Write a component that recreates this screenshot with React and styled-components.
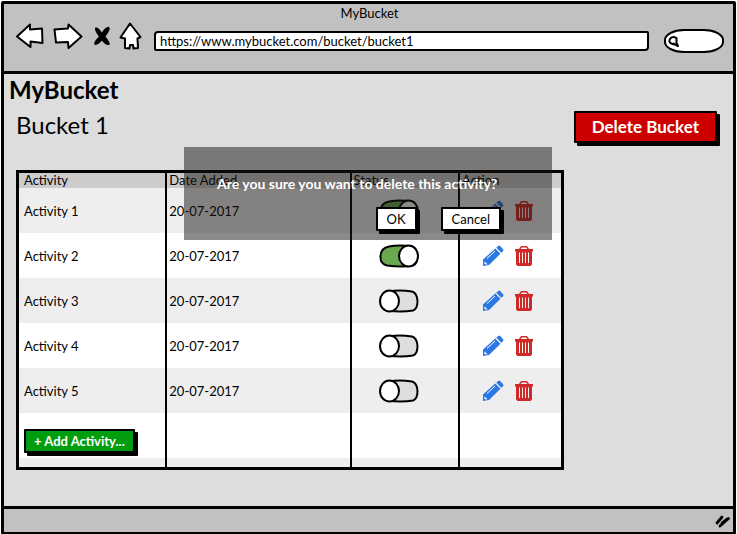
import React, { useState } from "react";
import styled, { createGlobalStyle } from "styled-components";

const GlobalStyle = createGlobalStyle`
  * { box-sizing: border-box; }
  body {
    margin: 0;
    background: #fff;
    color: #000;
    font-family: Lato, "Open Sans", sans-serif;
    font-size: 13px;
    line-height: 16px;
  }
  button, input { font: inherit; color: inherit; }
`;

const Browser = styled.div`
  min-height: 100vh;
  display: flex;
  flex-direction: column;
  padding: 1px 1px 2px;
`;

const Frame = styled.div`
  flex: 1;
  display: flex;
  flex-direction: column;
  border: 3px solid #000;
  border-radius: 2px;
  background: #ddd;
`;

const Chrome = styled.header`
  height: 70px;
  padding: 1px 9px 0 11px;
  background: #c1c1c1;
  border-bottom: 3px solid #000;
`;

const WindowTitle = styled.div`
  text-align: center;
`;

const Toolbar = styled.div`
  display: flex;
  align-items: flex-start;
  padding-top: 1px;
`;

const NavButton = styled.button`
  display: flex;
  padding: 0;
  margin-right: ${(p) => p.$gap || 8}px;
  border: 0;
  background: none;
  cursor: pointer;
`;

const Address = styled.input`
  flex: 1;
  min-width: 0;
  height: 20px;
  margin-top: 9px;
  padding: 0 4px;
  border: 2px solid #000;
  border-radius: 4px 2px 4px 2px;
  background: #fff;
`;

const SearchBox = styled.label`
  display: flex;
  align-items: center;
  width: 60px;
  height: 24px;
  margin: 7px 0 0 15px;
  padding-left: 2px;
  border: 2px solid #000;
  border-radius: 20px / 11px;
  background: #fff;
`;

const SearchInput = styled.input`
  flex: 1;
  min-width: 0;
  height: 16px;
  padding: 0 2px;
  border: 0;
  outline: 0;
  background: transparent;
`;

const Main = styled.main`
  position: relative;
  flex: 1;
  padding: 3px 16px 36px 12px;
`;

const Brand = styled.h1`
  margin: 0 0 0 -7px;
  font-size: 24px;
  line-height: 26px;
  font-weight: 700;
`;

const BucketBar = styled.div`
  display: flex;
  justify-content: space-between;
  align-items: flex-start;
  height: 43px;
  padding-top: 8px;
`;

const BucketName = styled.h2`
  margin: 0;
  font-size: 24px;
  line-height: 28px;
  font-weight: 400;
`;

const SketchButton = styled.button`
  height: ${(p) => (p.$large ? 32 : 24)}px;
  padding: 0 ${(p) => (p.$large ? 16 : 8)}px;
  border: 2px solid #000;
  border-radius: 1px;
  background: ${(p) => p.$fill || "#fff"};
  color: ${(p) => (p.$fill ? "#fff" : "#000")};
  box-shadow: 3px 3px 0 #000;
  font-size: ${(p) => (p.$large ? 17 : 13)}px;
  font-weight: ${(p) => (p.$fill ? 700 : 400)};
  white-space: nowrap;
  cursor: pointer;
`;

const TableArea = styled.div`
  margin: 24px 153px 0 0;
`;

const Table = styled.table`
  width: 100%;
  table-layout: fixed;
  border-collapse: separate;
  border-spacing: 0;
  border: 3px solid #000;
  background: #fff;
`;

const Row = styled.tr`
  height: ${(p) => p.$height || 45}px;
  background: ${(p) => p.$shade || "#fff"};
`;

const HeadCell = styled.th`
  width: ${(p) => p.$width};
  padding: 0 0 0 ${(p) => p.$inset || 2}px;
  border-left: ${(p) => (p.$first ? 0 : 2)}px solid #000;
  text-align: left;
  font-weight: 400;
  line-height: 15px;
`;

const Cell = styled.td`
  padding: 0 0 0 ${(p) => p.$inset || 2}px;
  border-left: ${(p) => (p.$first ? 0 : 2)}px solid #000;
`;

const AddCell = styled(Cell)`
  padding-top: 10px;
`;

const ToggleLabel = styled.label`
  position: relative;
  display: block;
  width: 40px;
  height: 24px;
`;

const ToggleInput = styled.input`
  position: absolute;
  inset: 0;
  width: 100%;
  height: 100%;
  margin: 0;
  opacity: 0;
  cursor: pointer;
`;

const Actions = styled.div`
  display: flex;
  align-items: center;
  gap: 11px;
`;

const IconButton = styled.button`
  display: flex;
  padding: 0;
  border: 0;
  background: none;
  cursor: pointer;
`;

const Dialog = styled.div`
  position: absolute;
  top: 73px;
  left: 180px;
  right: 181px;
  height: 93px;
  padding: 29px 51px 0 33px;
  background: rgba(26, 22, 18, 0.5);
`;

const Question = styled.p`
  margin: 0;
  color: #fff;
  font-size: 14px;
  font-weight: 700;
  white-space: nowrap;
`;

const Choices = styled.div`
  display: flex;
  justify-content: flex-end;
  gap: 24px;
  padding-top: 15px;
`;

const ChoiceButton = styled(SketchButton)`
  padding: 0 9px;
`;

const StatusBar = styled.footer`
  display: flex;
  justify-content: flex-end;
  align-items: center;
  height: 26px;
  padding-right: 2px;
  border-top: 3px solid #000;
  background: #c1c1c1;
`;

const outline = { fill: "#fff", stroke: "#000", strokeWidth: 2, strokeLinejoin: "round" };

const BackIcon = () => (
  <svg width="30" height="28" viewBox="0 0 30 28">
    <path d="M2 14.5 15 2.500V7.500L27 6.500 27.500 21 15.500 19.500V25Z" {...outline} />
  </svg>
);
const ForwardIcon = () => (
  <svg width="30" height="28" viewBox="0 0 30 28">
    <path d="M1.500 7.500 15 6.500 15.500 2.500 28.500 14.500 15.500 26 15 20 3 20.500Z" {...outline} />
  </svg>
);
const StopIcon = () => (
  <svg width="18" height="28" viewBox="0 0 18 28">
    <path d="M3 6Q5 6 9 12Q12 6 15.500 5.500Q17.500 7 11.500 14.500Q16 20 16 22Q13.500 23.500 9 17.500Q4 23 2 22Q1.500 19.500 7 14.500Q1.500 8 3 6Z" stroke="#000" strokeWidth="1.500" strokeLinejoin="round" />
  </svg>
);
const HomeIcon = () => (
  <svg width="24" height="28" viewBox="0 0 24 28">
    <path d="M11 1.500 21.500 15 18.500 16.500 19 26 14.500 26.500 14 23 11 23 10.500 26.500 6 26 6 16.500 1.500 15.500Z" {...outline} />
  </svg>
);
const SearchIcon = () => (
  <svg width="12" height="13" viewBox="0 0 12 13">
    <path d="M8.500 3Q4 .5 2 4T4.500 9 8.500 8L8.500 2.500 8.500 8 10 11M5.500 8.500 9.500 11" fill="none" stroke="#000" strokeWidth="2" strokeLinecap="round" />
  </svg>
);
const PencilIcon = () => (
  <svg width="22" height="22" viewBox="0 0 22 22">
    <path fill="#2b78e4" d="M14.300 2.700 16.500 .8H18L21.300 4.500V6L19.300 7.800ZM13.300 3.500 18.500 8.700 7 20 1 21V14.500Z" />
    <path d="M5 13.500 13 6" stroke="#fff" strokeWidth="1" />
    <path d="M2.500 16.500 5.500 19.200 3.500 19.600 2.300 18.500Z" fill="#fff" />
  </svg>
);
const TrashIcon = () => (
  <svg width="18" height="22" viewBox="0 0 18 22">
    <path fill="none" stroke="#cf2a27" strokeWidth="1.500" d="M5 5V3.500L6.500 1.700H11.500L13 3.500V5" />
    <path fill="#cf2a27" fillRule="evenodd" d="M0 4H18V6.500H17V19.500L15.500 21H2.500L1 19.500V6.500H0ZM4 7.500V18H5V7.500ZM7 7.500V18H8V7.500ZM10 7.500V18H11V7.500ZM13 7.500V18H14V7.500Z" />
  </svg>
);
const GripIcon = () => (
  <svg width="17" height="14" viewBox="0 0 17 14">
    <path d="M3 9 8 3M6 12 14.500 4.500M8 9 13 5" stroke="#000" strokeWidth="2.800" strokeLinecap="round" />
  </svg>
);

function Toggle({ name, initial }) {
  const [on, setOn] = useState(initial);
  return (
    <ToggleLabel>
      <svg width="40" height="24" viewBox="0 0 40 24">
        <path
          d="M10 2.500Q20 .5 33 2.500Q38 4 38.500 12Q38.500 20 34 21.500Q22 23.500 8 21.500Q1 20 1.500 12Q2 4 10 2.500Z"
          fill={on ? "#6aa84f" : "#ddd"}
          stroke="#000"
          strokeWidth="2"
        />
        <ellipse cx={on ? 29.5 : 10.5} cy="12" rx="9.500" ry="10.500" fill="#fff" stroke="#000" strokeWidth="2" />
      </svg>
      <ToggleInput type="checkbox" aria-label={name + " status"} checked={on} onChange={() => setOn(!on)} />
    </ToggleLabel>
  );
}

const activities = [
  { name: "Activity 1", date: "20-07-2017", on: true },
  { name: "Activity 2", date: "20-07-2017", on: true },
  { name: "Activity 3", date: "20-07-2017", on: false },
  { name: "Activity 4", date: "20-07-2017", on: false },
  { name: "Activity 5", date: "20-07-2017", on: false },
];

export default function App() {
  return (
    <Browser>
      <GlobalStyle />
      <Frame>
        <Chrome>
          <WindowTitle>MyBucket</WindowTitle>
          <Toolbar>
            <NavButton aria-label="Back"><BackIcon /></NavButton>
            <NavButton aria-label="Forward" $gap={10}><ForwardIcon /></NavButton>
            <NavButton aria-label="Stop"><StopIcon /></NavButton>
            <NavButton aria-label="Home" $gap={11}><HomeIcon /></NavButton>
            <Address aria-label="Address" defaultValue="https://www.mybucket.com/bucket/bucket1" />
            <SearchBox>
              <SearchIcon />
              <SearchInput type="text" aria-label="Search" />
            </SearchBox>
          </Toolbar>
        </Chrome>
        <Main>
          <Brand>MyBucket</Brand>
          <BucketBar>
            <BucketName>Bucket 1</BucketName>
            <SketchButton $large $fill="#cc0000">Delete Bucket</SketchButton>
          </BucketBar>
          <TableArea>
            <Table>
              <thead>
                <Row $height={15} $shade="#cccccc">
                  <HeadCell $first $width="27%" $inset={5}>Activity</HeadCell>
                  <HeadCell $width="34%">Date Added</HeadCell>
                  <HeadCell $width="20%">Status</HeadCell>
                  <HeadCell $width="19%">Action</HeadCell>
                </Row>
              </thead>
              <tbody>
                {activities.map((a, i) => (
                  <Row key={a.name} $shade={i % 2 ? "#fff" : "#eee"}>
                    <Cell $first $inset={5}>{a.name}</Cell>
                    <Cell>{a.date}</Cell>
                    <Cell $inset={27}><Toggle name={a.name} initial={a.on} /></Cell>
                    <Cell $inset={22}>
                      <Actions>
                        <IconButton aria-label={"Edit " + a.name}><PencilIcon /></IconButton>
                        <IconButton aria-label={"Delete " + a.name}><TrashIcon /></IconButton>
                      </Actions>
                    </Cell>
                  </Row>
                ))}
                <Row>
                  <AddCell $first $inset={5}>
                    <SketchButton $fill="#009e0f">+ Add Activity...</SketchButton>
                  </AddCell>
                  <Cell /><Cell /><Cell />
                </Row>
                <Row $height={9} $shade="#eee">
                  <Cell $first /><Cell /><Cell /><Cell />
                </Row>
              </tbody>
            </Table>
          </TableArea>
          <Dialog role="dialog" aria-labelledby="question">
            <Question id="question">Are you sure you want to delete this activity?</Question>
            <Choices>
              <ChoiceButton>OK</ChoiceButton>
              <ChoiceButton>Cancel</ChoiceButton>
            </Choices>
          </Dialog>
        </Main>
        <StatusBar><GripIcon /></StatusBar>
      </Frame>
    </Browser>
  );
}
